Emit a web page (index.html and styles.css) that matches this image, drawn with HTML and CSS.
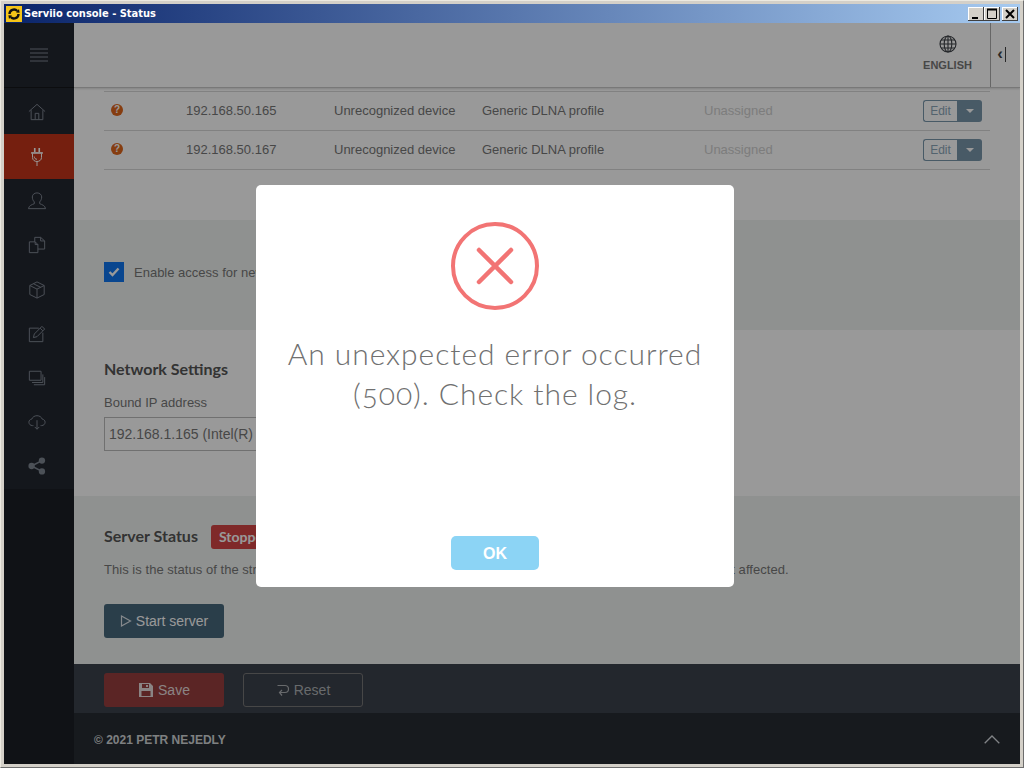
FILE: index.html
```html
<!DOCTYPE html>
<html lang="en">
<head>
<meta charset="utf-8">
<title>Serviio console - Status</title>
<link rel="stylesheet" href="styles.css">
</head>
<body>
<div class="window">
  <div class="titlebar">
    <svg class="app-icon" viewBox="0 0 16 16" width="16" height="16"><rect width="16" height="16" fill="#f5c518"/><path d="M3.5 8a4.5 4.5 0 0 1 7.8-3M12.5 8a4.5 4.5 0 0 1-7.8 3" fill="none" stroke="#111" stroke-width="2.4"/><path d="M10 6.6l3.6.2-.6-3.8zM6 9.4l-3.6-.2.6 3.8z" fill="#111"/></svg>
    <span class="title-text">Serviio console - Status</span>
    <div class="win-buttons">
      <span class="win-btn"><svg viewBox="0 0 16 14" width="16" height="14"><rect x="4" y="10" width="6" height="2" fill="#000"/></svg></span>
      <span class="win-btn"><svg viewBox="0 0 16 14" width="16" height="14"><path d="M3.5 2.5h9v9h-9z" fill="none" stroke="#000"/><path d="M3 2.5h10" stroke="#000" stroke-width="2"/></svg></span>
      <span class="win-btn win-close"><svg viewBox="0 0 16 14" width="16" height="14"><path d="M4 3l8 8M12 3l-8 8" stroke="#000" stroke-width="2"/></svg></span>
    </div>
  </div>
  <div class="app">
    <nav class="sidebar">
      <div class="side-top">
        <svg viewBox="0 0 18 14" width="18" height="14"><path d="M0 1h18M0 5h18M0 9h18M0 13h18" stroke="#7f8792" stroke-width="1"/></svg>
      </div>
      <div class="side-items">
        <div class="side-item"><svg viewBox="0 0 20 20" width="18" height="18"><path d="M1 9.500L10 1.500l9 8M3.500 8v10.500h13V8M8 18.500v-7h4v7" /></svg></div>
        <div class="side-item active"><svg viewBox="0 0 20 20" width="18" height="18"><path class="thick" d="M7.500 0v4.500M12.500 0v4.500"/><path class="thick" d="M3.500 5.500h13"/><path d="M5 6v4.500c0 3 2.500 4.500 5 4.500s5-1.500 5-4.500V6M7 9.500c0 2 1.300 3 3 3M10 15v5"/></svg></div>
        <div class="side-item"><svg viewBox="0 0 20 20" width="18" height="18"><path d="M7 11c-1.500-1.500-2.200-3.500-2.200-5.500C4.800 3 7 1 10 1s5.200 2 5.200 4.500c0 2-.7 4-2.200 5.500v2c2.500 1 6 2 6.500 5.500H.5C1 15 4.500 14 7 13z"/></svg></div>
        <div class="side-item"><svg viewBox="0 0 20 20" width="18" height="18"><path d="M1.500 6.500H8l3 3v9H1.500zM8 6.500v3h3M7.500 6.500V1.500H14l4.500 4v9H11M14 1.500v4h4.500"/></svg></div>
        <div class="side-item"><svg viewBox="0 0 20 20" width="18" height="18"><path d="M10 1l8 4v10l-8 4-8-4V5zM2 5l8 4 8-4M10 9v10M6 3l8 4"/></svg></div>
        <div class="side-item"><svg viewBox="0 0 20 20" width="18" height="18"><path d="M12 3.500H1.500v15h15V8.500M6 14l1-4L15.500 1.500l3 3L10 13zM13.500 3.500l3 3"/></svg></div>
        <div class="side-item"><svg viewBox="0 0 20 20" width="18" height="18"><path d="M1.500 2.500h13v10h-13zM16.500 6v9h-12M18.500 9v8.500h-12"/></svg></div>
        <div class="side-item"><svg viewBox="0 0 20 20" width="18" height="18"><path d="M6 14H5C2.500 14 1 12.200 1 10.200 1 8.400 2.400 7 4.200 6.800 5 4.500 7.300 3 10 3s5 1.500 5.800 3.800C17.600 7 19 8.400 19 10.200c0 2-1.500 3.800-4 3.800h-1M10 8v10M7.500 15.500L10 18l2.500-2.500"/></svg></div>
        <div class="side-item"><svg viewBox="0 0 20 20" width="18" height="18"><circle class="solid" cx="4" cy="10" r="3.500"/><circle class="solid" cx="15.500" cy="4" r="3.500"/><circle class="solid" cx="15.500" cy="16" r="3.500"/><path class="thick" d="M4 10L15.500 4M4 10l11.500 6"/></svg></div>
      </div>
    </nav>
    <div class="main">
      <header class="topbar">
        <div class="lang">
          <svg viewBox="0 0 18 18" width="18" height="18"><g fill="none" stroke="#3b3f45" stroke-width="1.100"><circle cx="9" cy="9" r="8"/><ellipse cx="9" cy="9" rx="3.800" ry="8"/><path d="M9 1v16M1 9h16M2 5h14M2 13h14"/></g></svg>
          <span>ENGLISH</span>
        </div>
        <div class="collapse"><span class="chev">‹</span><span class="bar"></span></div>
      </header>
      <div class="content">
        <section class="sec-table">
          <div class="row">
            <span class="q">?</span><span>192.168.50.165</span><span>Unrecognized device</span><span>Generic DLNA profile</span><span class="muted">Unassigned</span>
            <span class="edit"><span class="edit-l">Edit</span><span class="edit-r"><i class="caret"></i></span></span>
          </div>
          <div class="row">
            <span class="q">?</span><span>192.168.50.167</span><span>Unrecognized device</span><span>Generic DLNA profile</span><span class="muted">Unassigned</span>
            <span class="edit"><span class="edit-l">Edit</span><span class="edit-r"><i class="caret"></i></span></span>
          </div>
        </section>
        <section class="sec-access">
          <span class="check"><svg viewBox="0 0 12 10" width="12" height="10"><path d="M1.500 5l3 3 6-6.500" fill="none" stroke="#fff" stroke-width="2.400"/></svg></span>
          <span class="check-label">Enable access for new devices</span>
        </section>
        <section class="sec-network">
          <h2>Network Settings</h2>
          <div class="field-label">Bound IP address</div>
          <div class="select">192.168.1.165 (Intel(R) Ethernet Connection)</div>
        </section>
        <section class="sec-status">
          <div class="status-head"><h2>Server Status</h2><span class="badge">Stopped</span></div>
          <p class="status-text">This is the status of the streaming server. Settings changes require restart, while existing connections are not affected.</p>
          <button class="btn btn-start"><svg viewBox="0 0 12 12" width="12" height="12"><path d="M1.500 1l9 5-9 5z" fill="none" stroke="#dfe5ea" stroke-width="1.200"/></svg>Start server</button>
        </section>
      </div>
      <div class="actions">
        <button class="btn btn-save"><svg viewBox="0 0 16 16" width="16" height="16"><path fill-rule="evenodd" d="M1 1h11l3 3v11H1zM4 2v4h7V2zM8 3h2v2H8zM3.500 9v5h9V9z" fill="#e6dcdc"/></svg>Save</button>
        <button class="btn btn-reset"><svg viewBox="0 0 14 14" width="14" height="14"><path d="M1.500 2.500h7.500a3.500 3.500 0 0 1 0 7H4M6 7L3.500 9.500 6 12.500" fill="none" stroke="#aeb1b5" stroke-width="1.200"/></svg>Reset</button>
      </div>
      <footer class="footer">
        <span>© 2021 PETR NEJEDLY</span>
        <svg viewBox="0 0 16 9" width="16" height="9"><path d="M.7 8.300L8 1l7.300 7.300" fill="none" stroke="#d7dbe0" stroke-width="1.300"/></svg>
      </footer>
    </div>
    <div class="backdrop"></div>
    <div class="modal">
      <svg class="err" viewBox="0 0 88 88" width="88" height="88"><circle cx="44" cy="44" r="42" fill="none" stroke="#f27474" stroke-width="4"/><path d="M28 28l32 32M60 28L28 60" stroke="#f27474" stroke-width="4.500" stroke-linecap="round"/></svg>
      <div class="modal-text">An unexpected error occurred (500). Check the log.</div>
      <button class="ok">OK</button>
    </div>
  </div>
</div>
</body>
</html>
```
FILE: styles.css
```css
* { box-sizing: border-box; }
html, body { margin: 0; height: 100%; overflow: hidden; }
body { font-family: "Liberation Sans", Arial, sans-serif; font-size: 13px; color: #333; background: #d4d0c8; }
.window { width: 1024px; height: 768px; padding: 3px; display: flex; flex-direction: column; background: #d4d0c8; border: 1px solid #6d6d6d; border-top-color: #ece9e0; border-left-color: #ece9e0; }
.titlebar { height: 19px; flex: none; display: flex; align-items: center; padding: 0 2px; background: linear-gradient(to right, #0a246a, #a6caf0); color: #fff; font-family: "DejaVu Sans", sans-serif; font-stretch: condensed; font-weight: 700; font-size: 11px; }
.app-icon { flex: none; margin-right: 2px; }
.title-text { flex: 1; }
.win-buttons { display: flex; }
.win-btn { width: 16px; height: 14px; background: #d4d0c8; box-shadow: inset -1px -1px #404040, inset 1px 1px #fff; display: block; }
.win-btn svg { display: block; }
.win-close { margin-left: 2px; }
.app { flex: 1; display: flex; position: relative; min-height: 0; overflow: hidden; }
.sidebar { width: 70px; flex: none; background: #1c1f26; display: flex; flex-direction: column; }
.side-top { height: 65px; flex: none; display: flex; align-items: center; justify-content: center; background: #222730; border-bottom: 1px solid #141619; }
.side-items { display: flex; flex-direction: column; padding: 2px 0 0; background: #222730; }
.side-item { height: 44.200px; display: flex; align-items: center; justify-content: center; padding-right: 4px; }
.side-item svg { fill: none; stroke: #7f8792; stroke-width: 1.100; }
.side-item .thick { stroke-width: 1.800; }
.side-item .solid { fill: #7f8792; stroke: none; }
.side-item.active { background: #c43519; height: 45px; }
.side-item.active svg { stroke: #fff; }
.main { flex: 1; min-width: 0; display: flex; flex-direction: column; background: #fff; }
.topbar { height: 65px; flex: none; display: flex; justify-content: flex-end; background: #fff; border-bottom: 1px solid #c8c8c8; box-shadow: 0 1px 2px rgba(0,0,0,.15); position: relative; }
.lang { width: 86px; display: flex; flex-direction: column; align-items: center; padding: 12px 0 0 1px; gap: 6px; font-size: 11px; font-weight: 700; color: #777; }
.collapse { width: 30px; border-left: 1px solid #aaa; display: flex; align-items: center; justify-content: center; gap: 2px; color: #444; padding: 0 8px 2px 0; }
.chev { font-size: 17px; font-weight: 700; line-height: 16px; }
.bar { width: 1px; height: 15px; background: #444; }
.content { flex: 1; min-height: 0; display: flex; flex-direction: column; }
.sec-table { height: 132px; padding: 3px 30px 0; background: #fff; flex: none; }
.row { display: grid; grid-template-columns: 75px 148px 148px 222px 219px 59px; align-items: center; height: 39px; border-top: 1px solid #d8d8d8; color: #777; padding: 0 0 2px 7px; }
.row:last-child { border-bottom: 1px solid #d8d8d8; height: 40px; }
.q { width: 12px; height: 12px; border-radius: 50%; background: #e0661c; color: #fff; font-size: 10px; font-weight: 700; line-height: 12px; text-align: center; }
.muted { color: #d0d0d0; }
.edit { display: flex; height: 22px; width: 59px; margin-top: 2px; }
.edit-l { width: 34px; border: 1px solid #7896ab; border-radius: 3px 0 0 3px; color: #8aa6b8; font-size: 12px; line-height: 20px; text-align: center; border-right: 0; }
.edit-r { flex: 1; background: #7896ab; border-radius: 0 3px 3px 0; display: flex; align-items: center; justify-content: center; }
.caret { width: 0; height: 0; border-left: 4px solid transparent; border-right: 4px solid transparent; border-top: 4px solid #fff; }
.sec-access { height: 110px; flex: none; background: #eff2f0; padding: 0 30px 6px; display: flex; align-items: center; gap: 10px; }
.check { width: 20px; height: 20px; background: #0f75ef; display: flex; align-items: center; justify-content: center; }
.check-label { color: #777; }
h2 { font-family: Lato, sans-serif; font-size: 16px; font-weight: 700; color: #555; margin: 0; }
.sec-network { height: 166px; flex: none; background: #fff; padding: 29px 30px 0; }
.field-label { margin-top: 17px; color: #777; line-height: 16px; }
.select { margin-top: 6px; width: 400px; height: 34px; border: 1px solid #bbb; padding: 0 4px; line-height: 32px; font-size: 14px; color: #777; white-space: nowrap; overflow: hidden; }
.sec-status { flex: 1; min-height: 0; background: #eff2f0; padding: 28px 30px 0; }
.status-head { display: flex; align-items: center; gap: 13px; height: 22px; }
.badge { background: #d44545; color: #fff; font-family: Lato, sans-serif; font-weight: 700; font-size: 14px; padding: 0 8px; height: 24px; line-height: 24px; border-radius: 3px; margin-top: 3px; }
.status-text { margin: 16px 0 0; color: #777; white-space: nowrap; line-height: 16px; letter-spacing: .04px; }
.btn { font-family: "Liberation Sans", Arial, sans-serif; font-size: 14px; height: 34px; border-radius: 3px; display: inline-flex; align-items: center; justify-content: center; gap: 4px; width: 120px; border: 1px solid transparent; padding: 0; }
.btn-start { margin-top: 26px; background: #47687c; color: #fff; }
.actions { height: 49px; flex: none; background: #3b414b; padding: 2px 30px 0; display: flex; align-items: center; gap: 19px; }
.btn-save { background: #983f3f; color: #e6dcdc; }
.btn-reset { background: transparent; border-color: #777; color: #aeb1b5; }
.footer { height: 51px; flex: none; background: #272c33; display: flex; align-items: center; justify-content: space-between; padding: 2px 20px 0; color: #d2d5d8; font-weight: 700; font-size: 12px; }
.backdrop { position: absolute; inset: 0; background: rgba(0,0,0,.4); }
.modal { position: absolute; left: 252px; top: 162px; width: 478px; height: 402px; background: #fff; border-radius: 5px; display: flex; flex-direction: column; align-items: center; padding-top: 37px; }
.err { flex: none; }
.modal-text { margin-top: 23px; width: 450px; text-align: center; font-family: Lato, sans-serif; font-weight: 300; font-size: 30px; line-height: 40px; letter-spacing: .93px; color: #707070; font-variant-numeric: oldstyle-nums; }
.ok { position: absolute; left: 195px; top: 351px; width: 88px; height: 34px; border: 0; border-radius: 5px; padding: 1px 0 0; background: #8cd4f5; color: #fff; font-family: "Liberation Sans", Arial, sans-serif; font-weight: 700; font-size: 16px; }
```
